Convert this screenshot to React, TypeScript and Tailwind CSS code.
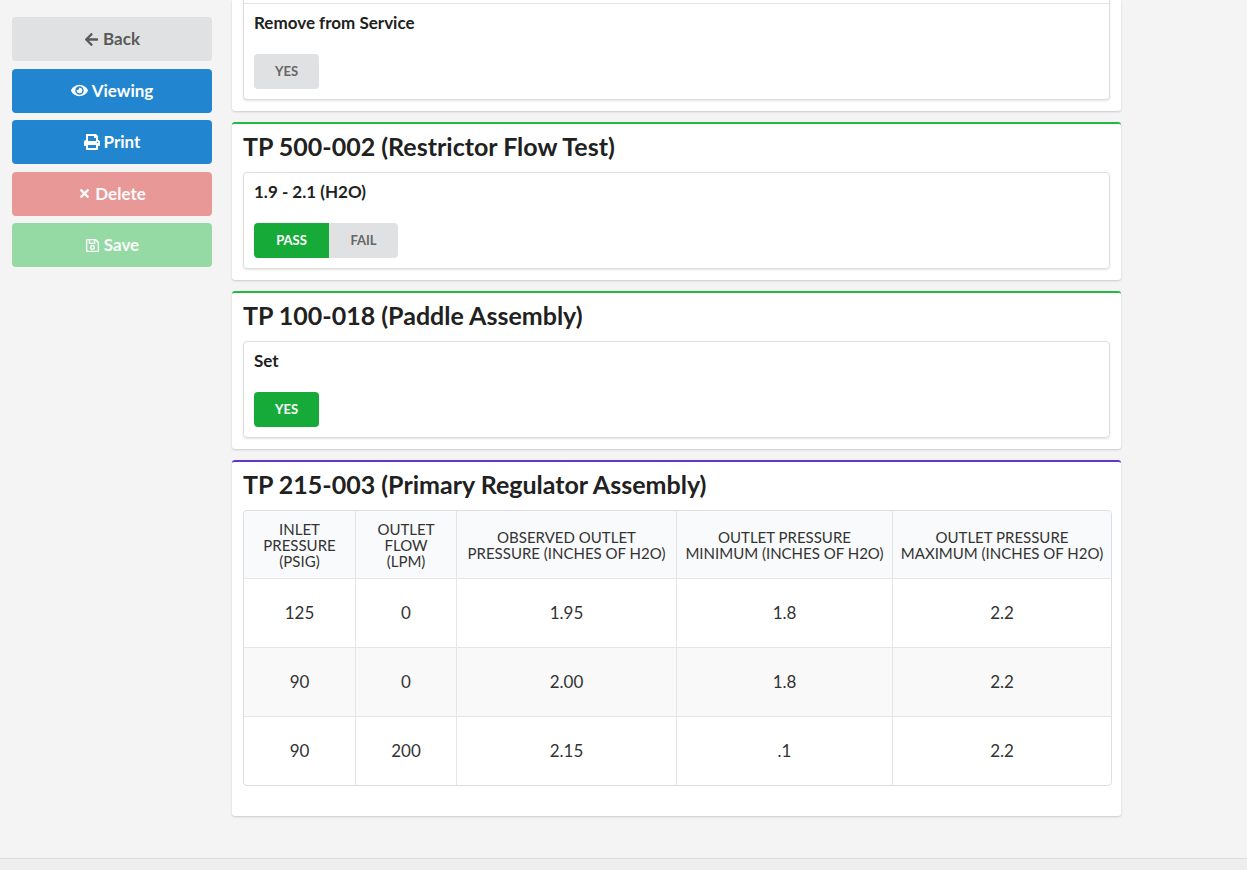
import React from "react";
import { FaArrowLeft, FaEye, FaPrint, FaTimes, FaRegSave } from "react-icons/fa";

const font = "font-[Lato,'Liberation_Sans',sans-serif]";

function SideButton({
  icon,
  label,
  cls,
}: {
  icon: React.ReactNode;
  label: string;
  cls: string;
}) {
  return (
    <button
      className={`h-[44px] w-full rounded-[4px] flex items-center justify-center gap-[4px] text-[17px] font-bold ${cls}`}
    >
      {icon}
      <span>{label}</span>
    </button>
  );
}

function Item({ label, children, divider }: { label: string; children: React.ReactNode; divider?: boolean }) {
  return (
    <div className={`px-[10px] pt-[9px] pb-[10px] ${divider ? "border-t border-[#e3e3e3]" : ""}`}>
      <div className="text-[17px] leading-[20px] font-bold text-[#212121] mb-[21px]">{label}</div>
      <div className="flex">{children}</div>
    </div>
  );
}

function Card({
  title,
  color,
  children,
  pb = "pb-[11px]",
}: {
  title: string;
  color: string;
  children: React.ReactNode;
  pb?: string;
}) {
  return (
    <div
      className={`bg-white rounded-[3px] border-t-2 ${color} px-[11px] pt-[7px] ${pb} shadow-[0_1px_2px_0_rgba(34,36,38,0.2)]`}
    >
      <h2 className="text-[25px] leading-[30px] font-bold text-[#212121] mb-[11px]">{title}</h2>
      {children}
    </div>
  );
}

const headers: React.ReactNode[] = [
  <>INLET<br />PRESSURE<br />(PSIG)</>,
  <>OUTLET<br />FLOW<br />(LPM)</>,
  <>OBSERVED OUTLET<br />PRESSURE (INCHES OF H2O)</>,
  <>OUTLET PRESSURE<br />MINIMUM (INCHES OF H2O)</>,
  <>OUTLET PRESSURE<br />MAXIMUM (INCHES OF H2O)</>,
];

const rows = [
  ["125", "0", "1.95", "1.8", "2.2"],
  ["90", "0", "2.00", "1.8", "2.2"],
  ["90", "200", "2.15", ".1", "2.2"],
];

const widths = ["w-[111px]", "w-[101px]", "w-[220px]", "w-[216px]", "w-[219px]"];

export default function App() {
  return (
    <div className={`min-h-[870px] bg-[#f4f4f4] ${font} flex flex-col`}>
      <div className="flex pl-[12px]">
        <aside className="w-[200px] pt-[17px] flex flex-col gap-[7.5px]">
          <SideButton
            icon={<FaArrowLeft className="w-[15px] h-[15px]" />}
            label="Back"
            cls="bg-[#e0e1e2] text-[#5a5a5a]"
          />
          <SideButton
            icon={<FaEye className="w-[17px] h-[17px]" />}
            label="Viewing"
            cls="bg-[#2185d0] text-white"
          />
          <SideButton
            icon={<FaPrint className="w-[16px] h-[16px]" />}
            label="Print"
            cls="bg-[#2185d0] text-white"
          />
          <SideButton
            icon={<FaTimes className="w-[13px] h-[13px]" />}
            label="Delete"
            cls="bg-[#e99898] text-[#fbfbfb]"
          />
          <SideButton
            icon={<FaRegSave className="w-[15px] h-[15px]" />}
            label="Save"
            cls="bg-[#95daa5] text-[#fbfbfb]"
          />
        </aside>

        <main className="ml-[20px] w-[889px] flex flex-col gap-[11px]">
          {/* first card (scrolled, top cut off) */}
          <div className="bg-white rounded-b-[3px] px-[11px] pb-[11px] shadow-[0_1px_2px_0_rgba(34,36,38,0.2)]">
            <div className="border-x border-b border-[#dedede] rounded-b-[4px] shadow-[0_1px_2px_0_rgba(34,36,38,0.12)]">
              <div className="h-[3px]" />
              <Item label="Remove from Service" divider>
                <button className="h-[35px] px-[21px] rounded-[4px] bg-[#e0e1e2] text-[#666] text-[13px] font-bold">
                  YES
                </button>
              </Item>
            </div>
          </div>

          <Card title="TP 500-002 (Restrictor Flow Test)" color="border-[#21ba45]">
            <div className="border border-[#dedede] rounded-[4px] shadow-[0_1px_2px_0_rgba(34,36,38,0.12)]">
              <Item label="1.9 - 2.1 (H2O)">
                <button className="h-[35px] w-[75px] rounded-l-[4px] bg-[#16ab39] text-white text-[13px] font-bold">
                  PASS
                </button>
                <button className="h-[35px] w-[69px] rounded-r-[4px] bg-[#e0e1e2] text-[#666] text-[13px] font-bold">
                  FAIL
                </button>
              </Item>
            </div>
          </Card>

          <Card title="TP 100-018 (Paddle Assembly)" color="border-[#21ba45]">
            <div className="border border-[#dedede] rounded-[4px] shadow-[0_1px_2px_0_rgba(34,36,38,0.12)]">
              <Item label="Set">
                <button className="h-[35px] px-[21px] rounded-[4px] bg-[#16ab39] text-white text-[13px] font-bold">
                  YES
                </button>
              </Item>
            </div>
          </Card>

          <Card title="TP 215-003 (Primary Regulator Assembly)" color="border-[#6435c9]" pb="pb-[30px]">
            <table className="w-[867px] table-fixed border-separate border-spacing-0 border border-[#dedede] rounded-[4px] text-[#333]">
              <colgroup>
                {widths.map((w, i) => (
                  <col key={i} className={w} />
                ))}
              </colgroup>
              <thead>
                <tr>
                  {headers.map((h, i) => (
                    <th
                      key={i}
                      className={`h-[67px] bg-[#f9fafb] font-normal text-[15px] leading-[16px] text-center whitespace-nowrap px-[2px] ${
                        i > 0 ? "border-l border-[#e6e6e6]" : ""
                      } ${i === 0 ? "rounded-tl-[4px]" : ""} ${i === 4 ? "rounded-tr-[4px]" : ""}`}
                    >
                      {h}
                    </th>
                  ))}
                </tr>
              </thead>
              <tbody>
                {rows.map((r, ri) => (
                  <tr key={ri} className={ri === 1 ? "bg-[#f9f9f9]" : ""}>
                    {r.map((c, ci) => (
                      <td
                        key={ci}
                        className={`h-[69px] text-[17px] text-center border-t border-[#e6e6e6] ${
                          ci > 0 ? "border-l" : ""
                        }`}
                      >
                        {c}
                      </td>
                    ))}
                  </tr>
                ))}
              </tbody>
            </table>
          </Card>
        </main>
      </div>
      <footer className="mt-[42px] h-[40px] border-t border-[#dcdcdc] bg-[#eeeeee]" />
    </div>
  );
}
